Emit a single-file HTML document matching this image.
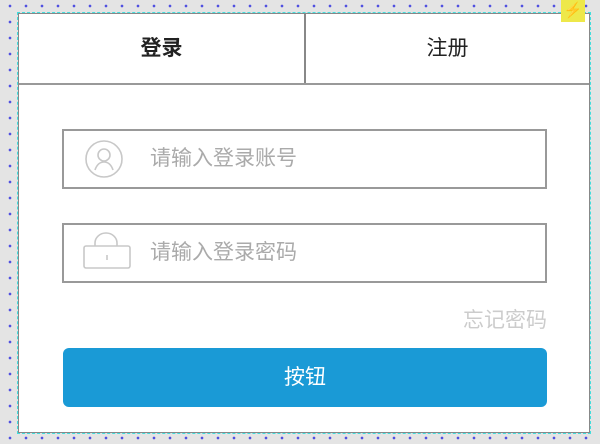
<!DOCTYPE html><html><head><meta charset="utf-8"><style>
body{margin:0;width:600px;height:444px;overflow:hidden;background-color:#e4e4e4;background-image:radial-gradient(circle,#5050e0 1.1px,transparent 1.6px);background-size:16px 16px;background-position:2px -2px;font-family:"Liberation Sans","Noto Sans CJK SC",sans-serif;position:relative}
.panel{position:absolute;left:18px;top:13px;width:570px;height:418px;background:#fff;border:1px solid #888;outline:1px dashed #4dd;}
.tab{position:absolute;top:0;height:70px;line-height:70px;text-align:center;font-size:21px;color:#222}
.t1{left:0;width:285px;font-weight:bold;border-right:2px solid #888}
.t2{left:287px;width:283px}
.line{position:absolute;left:0;top:69px;width:570px;height:2px;background:#999}
.inp{position:absolute;left:43px;border:2px solid #999;box-sizing:border-box;width:485px;height:60px}
.ph{position:absolute;left:86px;top:0;line-height:56px;font-size:21px;color:#aaa}
.btn{position:absolute;left:44px;top:334px;width:484px;height:59px;background:#1a9ad6;border-radius:6px;color:#fff;font-size:21px;text-align:center;line-height:59px}
.fg{position:absolute;right:42px;top:290px;font-size:21px;color:#ccc}
.badge{position:absolute;left:561px;top:0;width:24px;height:22px;background:#eee84a;text-align:center;font-size:15px;line-height:22px;color:#333}
</style></head><body>
<div class="panel">
<div class="tab t1">登录</div><div class="tab t2">注册</div><div class="line"></div>
<div class="inp" style="top:115px"><svg width="40" height="40" style="position:absolute;left:20px;top:8px" viewBox="0 0 40 40" fill="none" stroke="#c8c8c8" stroke-width="1.6"><circle cx="20" cy="20" r="18"/><circle cx="20" cy="16" r="6"/><path d="M11 31c2-6 5-8 9-8s7 2 9 8"/></svg><div class="ph">请输入登录账号</div></div>
<div class="inp" style="top:209px"><svg width="52" height="42" style="position:absolute;left:17px;top:4px" viewBox="0 0 52 42" fill="none" stroke="#c8c8c8" stroke-width="1.6"><path d="M14 17v-3a11 10 0 0 1 22 0v3"/><rect x="3" y="17" width="46" height="22" rx="2"/><path d="M26 26v5"/></svg><div class="ph">请输入登录密码</div></div>
<div class="fg">忘记密码</div>
<div class="btn">按钮</div>
</div>
<div class="badge">⚡</div>
</body></html>
